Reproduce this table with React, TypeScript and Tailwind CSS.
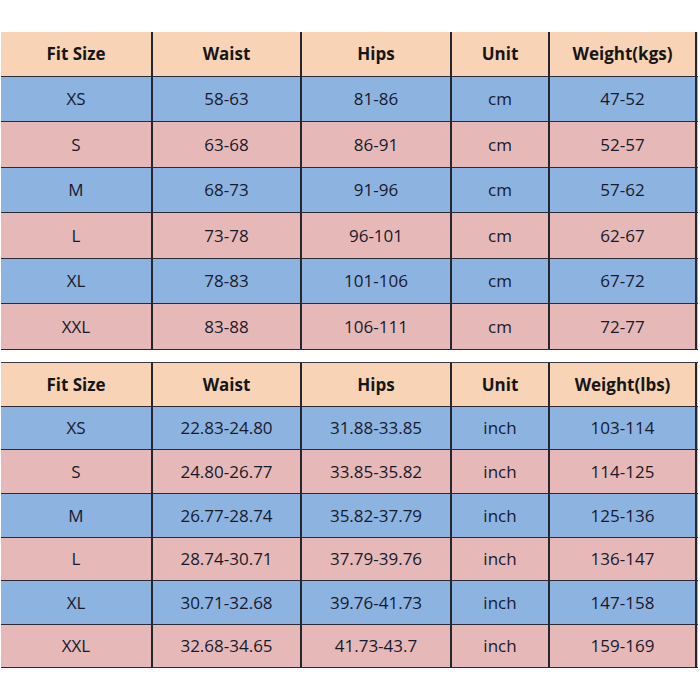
import React from "react";

const cols = ["w-[150px]", "w-[149px]", "w-[150px]", "w-[98px]", "w-[149px]"];

const PEACH = "bg-[#f9d3b5]";
const BLUE = "bg-[#8db3e1]";
const PINK = "bg-[#e6b9b8]";

type Row = string[];

function Table({
  header,
  rows,
  heights,
  headerH,
  topBorder,
}: {
  header: Row;
  rows: Row[];
  heights: string[];
  headerH: string;
  topBorder: boolean;
}) {
  return (
    <div className={`ml-[1px] w-[697px] flex flex-col ${topBorder ? "border-t border-[#3a3a44]" : ""}`}>
      <div className={`flex ${headerH} ${PEACH} border-b border-[#2a2a36]`}>
        {header.map((h, i) => (
          <div
            key={i}
            className={`${cols[i]} ${i > 0 ? "border-l-2 border-[#26262e]" : ""} ${i === 4 ? "border-r-2" : ""} flex items-center justify-center font-bold text-[17px] text-[#161616]`}
          >
            {h}
          </div>
        ))}
      </div>
      {rows.map((r, ri) => (
        <div
          key={ri}
          className={`flex ${heights[ri]} ${ri % 2 === 0 ? BLUE : PINK} border-b border-[#2a2a36]`}
        >
          {r.map((c, i) => (
            <div
              key={i}
              className={`${cols[i]} ${i > 0 ? "border-l-2 border-[#26262e]" : ""} ${i === 4 ? "border-r-2" : ""} flex items-center justify-center text-[17px] text-[#171a2c]`}
            >
              {c}
            </div>
          ))}
        </div>
      ))}
    </div>
  );
}

export default function App() {
  const t1: Row[] = [
    ["XS", "58-63", "81-86", "cm", "47-52"],
    ["S", "63-68", "86-91", "cm", "52-57"],
    ["M", "68-73", "91-96", "cm", "57-62"],
    ["L", "73-78", "96-101", "cm", "62-67"],
    ["XL", "78-83", "101-106", "cm", "67-72"],
    ["XXL", "83-88", "106-111", "cm", "72-77"],
  ];
  const t2: Row[] = [
    ["XS", "22.83-24.80", "31.88-33.85", "inch", "103-114"],
    ["S", "24.80-26.77", "33.85-35.82", "inch", "114-125"],
    ["M", "26.77-28.74", "35.82-37.79", "inch", "125-136"],
    ["L", "28.74-30.71", "37.79-39.76", "inch", "136-147"],
    ["XL", "30.71-32.68", "39.76-41.73", "inch", "147-158"],
    ["XXL", "32.68-34.65", "41.73-43.7", "inch", "159-169"],
  ];
  return (
    <div
      className="w-[700px] h-[700px] bg-white flex flex-col"
      style={{ fontFamily: '"Open Sans", "Noto Sans", sans-serif' }}
    >
      <div className="h-[32px]" />
      <Table
        header={["Fit Size", "Waist", "Hips", "Unit", "Weight(kgs)"]}
        rows={t1}
        headerH="h-[45px]"
        heights={["h-[45px]", "h-[46px]", "h-[45px]", "h-[46px]", "h-[45px]", "h-[46px]"]}
        topBorder={false}
      />
      <div className="h-[12px]" />
      <Table
        header={["Fit Size", "Waist", "Hips", "Unit", "Weight(lbs)"]}
        rows={t2}
        headerH="h-[44px]"
        heights={["h-[43px]", "h-[44px]", "h-[44px]", "h-[43px]", "h-[44px]", "h-[43px]"]}
        topBorder={true}
      />
    </div>
  );
}
